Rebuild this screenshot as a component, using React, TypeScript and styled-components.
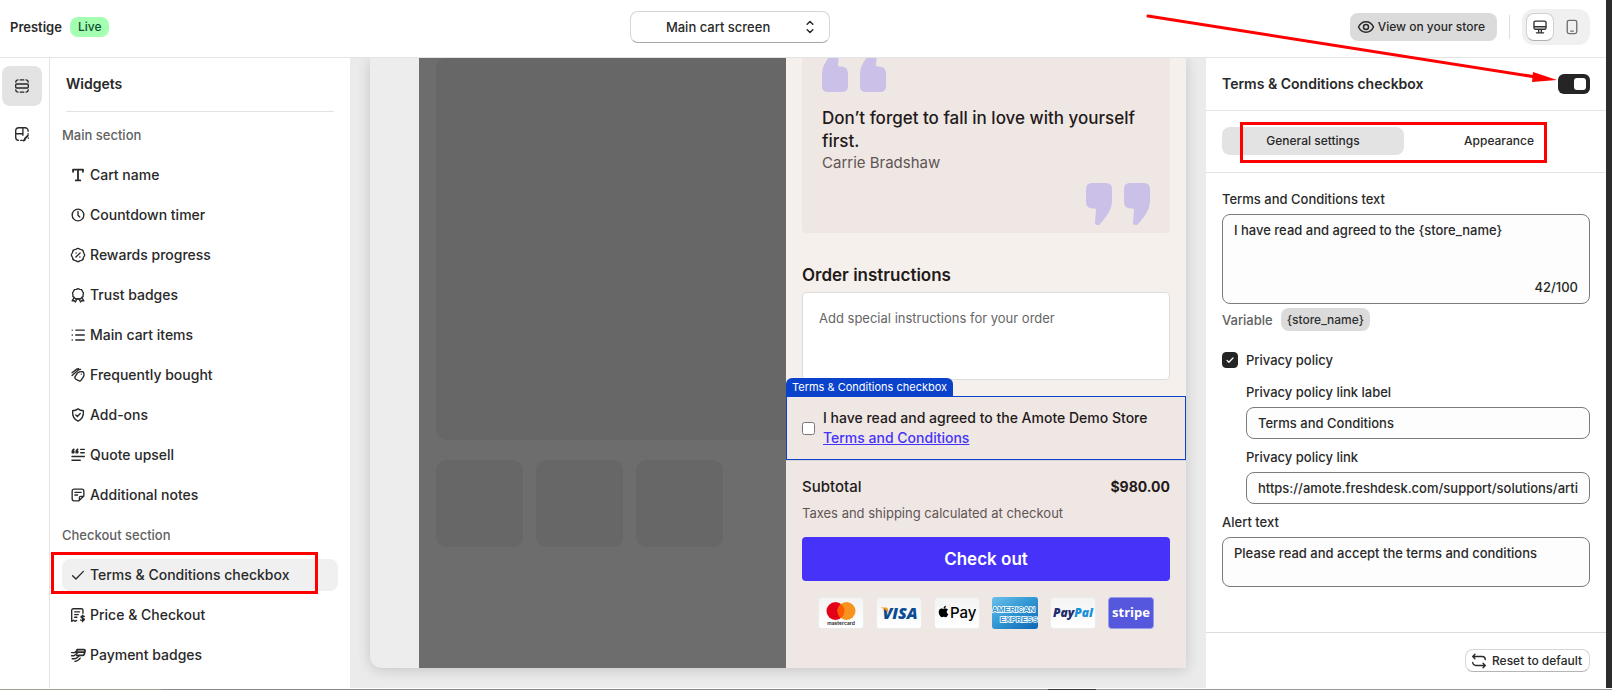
import React from 'react';
import styled, { createGlobalStyle, css } from 'styled-components';
import { FaApple } from 'react-icons/fa';

const GlobalStyle = createGlobalStyle`
  *, *::before, *::after { box-sizing: border-box; }
  body {
    margin: 0;
    background: #fff;
    color: #292929;
    font: 400 13px/20px Inter, sans-serif;
  }
  button, input, textarea, select { font: inherit; color: inherit; margin: 0; }
  h2, h3, p { margin: 0; }
`;

/* ---------- icons ---------- */

const ICONS: Record<string, React.ReactNode> = {
  sections: (
    <>
      <rect x="3" y="7.800" width="14" height="4.400" rx="1" />
      <path d="M3 5.700a2.700 2.700 0 0 1 2.500-2.500M8 3.200h4M14.500 3.200A2.700 2.700 0 0 1 17 5.700M3 14.300a2.700 2.700 0 0 0 2.500 2.500M8 16.800h4M14.500 16.800a2.700 2.700 0 0 0 2.500-2.500" />
    </>
  ),
  theme: (
    <>
      <path d="M16.800 7V6.500A3.400 3.400 0 0 0 13.400 3H6.500A3.500 3.500 0 0 0 3 6.500v7A3.400 3.400 0 0 0 6.200 17M3 9.700h8M11 3v8.500M8.500 17H10M16.800 9.500v.600" />
      <path d="M16.500 11.700l-3 3.200M11.400 17.200c1.400 0 2.200-.700 1.800-2" strokeWidth="2" />
      <path d="M17 14.300v.300" />
    </>
  ),
  text: <path d="M4.500 6.500V4h11v2.500M10 4v12M7.500 16h5" strokeWidth="2" />,
  clock: (
    <>
      <circle cx="10" cy="10" r="6.500" />
      <path d="M10 6v4.200l2 2" />
    </>
  ),
  discount: (
    <>
      <path d="M8.200 3.400a2.500 2.500 0 0 1 3.600 0 2.500 2.500 0 0 0 1.700.7 2.500 2.500 0 0 1 2.400 2.400c0 .7.3 1.300.7 1.700a2.500 2.500 0 0 1 0 3.600 2.500 2.500 0 0 0-.7 1.700 2.500 2.500 0 0 1-2.400 2.400 2.500 2.500 0 0 0-1.700.7 2.500 2.500 0 0 1-3.600 0 2.500 2.500 0 0 0-1.700-.7 2.500 2.500 0 0 1-2.400-2.400 2.500 2.500 0 0 0-.7-1.700 2.500 2.500 0 0 1 0-3.600 2.500 2.500 0 0 0 .7-1.700 2.500 2.500 0 0 1 2.400-2.400 2.500 2.500 0 0 0 1.700-.7z" />
      <path d="M12.300 7.700l-4.600 4.600M7.800 7.800h.2M12 12.200h.2" />
    </>
  ),
  badge: (
    <>
      <path d="M10 2.800l1.900.9 2.100.3.900 1.900 1.200 1.700-.5 2 .1 2.100-1.700 1.200-1.300 1.500-2-.2-.700.100-.700-.100-2 .200-1.300-1.500-1.700-1.200.100-2.100-.500-2 1.200-1.700.900-1.900 2.100-.300z" />
      <path d="M5.800 12.800l-2.300 3.700 2.400-.200 1.200 1.500 1.900-3.400 1-.200 1 .200 1.900 3.400 1.200-1.500 2.400.200-2.300-3.700" />
    </>
  ),
  list: <path d="M7.500 4.500H17M7.500 10H17M7.500 15.500H17M3.500 4.500h.2M3.500 10h.2M3.500 15.500h.2" />,
  tags: (
    <>
      <path d="M9.300 7.800l2.500-1.300a2.500 2.500 0 0 1 1.300-.3l2 .2a1.500 1.500 0 0 1 1.300 1.300l.2 2a3 3 0 0 1-.5 2l-2.400 3.800a2.300 2.300 0 0 1-3 .8l-3-1.600a2.300 2.300 0 0 1-.9-3z" />
      <path d="M3.400 10.500l7-6a3 3 0 0 1 2.400-.7M3.400 7.500l5.200-4a3 3 0 0 1 2-.6M13.600 9h.1" />
    </>
  ),
  shield: (
    <>
      <path d="M10 3.200c1.700 1.300 3.600 2 6 2.100.4 5.600-1.200 9.400-6 11.500-4.800-2.100-6.400-5.900-6-11.500 2.400-.1 4.300-.8 6-2.100z" />
      <path d="M7.500 10l1.800 1.700 3.200-3.400" />
    </>
  ),
  quote: (
    <>
      <path d="M13 3.800H17M13 7.500H17M3.300 11.700H17M3.300 15.800h9.200" />
      <path d="M5.300 3.800C4 4.400 3.600 5.600 3.700 7.300h1.600v-1.300M9.600 3.800C8.300 4.400 7.900 5.600 8 7.300h1.600v-1.300" strokeWidth="2" />
    </>
  ),
  note: (
    <path d="M16.500 11V5.700a2.200 2.200 0 0 0-2.200-2.200H5.700a2.200 2.200 0 0 0-2.200 2.200v8.600a2.200 2.200 0 0 0 2.200 2.200H11l5.500-5.500zM11.500 16v-3a1.500 1.500 0 0 1 1.500-1.500h3M6.500 7h7M6.500 10h3" />
  ),
  check: <path d="M4 10.800l3.700 3.700L16 6" />,
  receipt: (
    <>
      <path d="M15.500 8V4.700A1.700 1.700 0 0 0 13.800 3H4.700A1.700 1.700 0 0 0 3 4.700V17l2-1.200L7 17l1.500-1M6.300 6.500h5.500M6.300 9.500h4M6.300 12.500h2.500" />
      <path d="M17 11.700c-.6-.8-3.700-1-3.700.6s3.700 1 3.700 2.700-3.300 1.600-4 .5M15.200 10.300v7.200" />
    </>
  ),
  cards: (
    <>
      <path d="M9 4h7.500a1.300 1.300 0 0 1 1.300 1.700L17 9a2 2 0 0 1-2 1.500H8.500M8 6.800h9.500" strokeWidth="2" />
      <path d="M2.800 7.300h3.700L10 4M2.800 10.800h2.700l4.200-3.300M3.500 14.200h2.700c2 0 3.800-2 5.300-3.500M6.500 17c3 0 4.500-1.500 6-3.500" />
    </>
  ),
  eye: (
    <>
      <path d="M2.500 10C4 6.800 6.700 4.800 10 4.800s6 2 7.500 5.200c-1.500 3.200-4.200 5.200-7.500 5.200S4 13.200 2.500 10z" />
      <circle cx="10" cy="10" r="2.500" />
    </>
  ),
  desktop: (
    <path d="M5 3.500h10a1.700 1.700 0 0 1 1.700 1.700v5.600a1.700 1.700 0 0 1-1.700 1.700H5a1.700 1.700 0 0 1-1.700-1.700V5.200A1.700 1.700 0 0 1 5 3.500zM3.500 9.700h13M8.500 12.500v3M11.500 12.500v3M6 16.500h8" />
  ),
  mobile: (
    <>
      <rect x="4.700" y="2.700" width="10.600" height="14.600" rx="2" />
      <path d="M8.500 14.500h3" />
    </>
  ),
  select: <path d="M7.200 7.200L10 4.500l2.800 2.700M7.200 12.800L10 15.500l2.800-2.700" />,
  reset: (
    <path d="M5.500 2.500L3 5l2.500 2.500M3 5h10.500A3.500 3.500 0 0 1 17 8.500M14.500 12.500L17 15l-2.500 2.500M17 15H6.500A3.500 3.500 0 0 1 3 11.500" />
  ),
};

const Svg = styled.svg<{ $size: number }>`
  width: ${(p) => p.$size}px;
  height: ${(p) => p.$size}px;
  flex: none;
  fill: none;
  stroke: currentColor;
  stroke-width: 1.5;
  stroke-linecap: round;
  stroke-linejoin: round;
`;

const Icon = ({ name, size = 18 }: { name: string; size?: number }) => (
  <Svg $size={size} viewBox="0 0 20 20" aria-hidden="true">
    {ICONS[name]}
  </Svg>
);

/* ---------- frame ---------- */

const Page = styled.div`
  display: flex;
  flex-direction: column;
  height: 100vh;
  min-height: 640px;
`;
const Frame = styled.div`
  flex: 1;
  min-height: 0;
  display: flex;
`;
const Shell = styled.div`
  position: relative;
  flex: 1;
  min-width: 0;
  display: flex;
  flex-direction: column;
`;
const WindowEdge = styled.div`
  width: 6px;
  background: #2c2c2c;
`;
const BottomEdge = styled.div`
  height: 2px;
  border-top: 1px solid #fff;
  background: linear-gradient(
    90deg,
    #a09c94 0 10%,
    #8a8a8a 10% 65%,
    #3a3838 65% 68%,
    #9a9a9a 68% 100%
  );
`;
const Columns = styled.div`
  flex: 1;
  min-height: 0;
  display: flex;
`;

/* ---------- top bar ---------- */

const TopBar = styled.header`
  display: flex;
  align-items: center;
  justify-content: space-between;
  height: 58px;
  flex: none;
  padding: 0 16px 4px 10px;
  border-bottom: 1px solid #e3e3e3;
`;
const ThemeTitle = styled.div`
  display: flex;
  align-items: center;
  gap: 8px;
  font-weight: 600;
`;
const LiveBadge = styled.span`
  padding: 0 8px;
  border-radius: 8px;
  background: #a4ffb1;
  color: #0c5132;
  font-size: 12px;
  font-weight: 450;
`;
const ScreenPicker = styled.label`
  position: relative;
  width: 200px;
  height: 32px;

  svg {
    position: absolute;
    right: 10px;
    top: 6px;
    pointer-events: none;
  }
`;
const ScreenSelect = styled.select`
  appearance: none;
  width: 100%;
  height: 100%;
  padding: 0 31px 0 8px;
  border: 1px solid #d6d6d6;
  border-bottom-color: #a8a8a8;
  border-radius: 8px;
  background: #fff;
  font-weight: 450;
  text-align: center;
  text-align-last: center;
`;
const TopActions = styled.div`
  display: flex;
  align-items: center;
  gap: 12px;
`;
const ViewButton = styled.button`
  display: flex;
  align-items: center;
  gap: 2px;
  height: 28px;
  padding: 0 12px 0 6px;
  border: 0;
  border-radius: 8px;
  background: #dbdbdb;
  font-size: 12px;
  font-weight: 500;
`;
const Divider = styled.span`
  width: 1px;
  height: 24px;
  background: #dedede;
`;
const DeviceSwitch = styled.div`
  display: flex;
  gap: 4px;
  padding: 4px;
  border-radius: 12px;
  background: #f0f0f0;
`;
const DeviceButton = styled.button<{ $active?: boolean }>`
  display: grid;
  place-items: center;
  width: 28px;
  height: 28px;
  padding: 0;
  border: 1px solid transparent;
  border-radius: 8px;
  background: none;
  color: #707070;
  ${(p) =>
    p.$active &&
    css`
      border-color: #d0d0d0;
      border-bottom-color: #b0b0b0;
      background: #fff;
      color: #303030;
    `}
`;

/* ---------- left side ---------- */

const Rail = styled.nav`
  display: flex;
  flex-direction: column;
  gap: 8px;
  width: 50px;
  flex: none;
  padding: 8px 2px;
  border-right: 1px solid #e3e3e3;
`;
const RailButton = styled.button<{ $active?: boolean }>`
  display: grid;
  place-items: center;
  width: 40px;
  height: 40px;
  padding: 0;
  border: 0;
  border-radius: 8px;
  background: ${(p) => (p.$active ? '#e3e3e3' : 'none')};
`;
const Sidebar = styled.aside`
  width: 300px;
  flex: none;
  padding: 0 12px;
`;
const SidebarTitle = styled.h2`
  margin: 0 4px 7px;
  padding: 16px 0 17px;
  border-bottom: 1px solid #e3e3e3;
  font-size: 14px;
  line-height: 20px;
  font-weight: 600;
`;
const WidgetList = styled.div`
  display: flex;
  flex-direction: column;
  gap: 8px;
`;
const GroupTitle = styled.h3`
  font-size: 13px;
  line-height: 32px;
  font-weight: 450;
  color: #616161;
`;
const WidgetSlot = styled.div`
  position: relative;
`;
const WidgetButton = styled.button<{ $active?: boolean }>`
  display: flex;
  align-items: center;
  gap: 3px;
  width: 100%;
  height: 32px;
  padding: 0 7px;
  border: 0;
  border-radius: 8px;
  background: ${(p) => (p.$active ? '#f0f0f0' : 'none')};
  font-size: 14px;
  font-weight: 450;
`;

/* ---------- annotations ---------- */

const Highlight = styled.span<{ $inset: string }>`
  position: absolute;
  inset: ${(p) => p.$inset};
  border: 3px solid #f00;
  pointer-events: none;
`;
const Arrow = styled.svg`
  position: absolute;
  top: 0;
  right: 44px;
  width: 418px;
  height: 90px;
  pointer-events: none;
`;

/* ---------- preview ---------- */

const Canvas = styled.main`
  flex: 1;
  min-width: 0;
  display: flex;
  padding: 0 20px 20px;
  overflow: hidden;
  background: #ebebeb;
`;
const Preview = styled.div`
  flex: 1;
  min-width: 0;
  display: flex;
  padding-left: 49px;
  border-radius: 0 0 0 12px;
  background: #ededed;
  box-shadow: 0 2px 14px rgba(0, 0, 0, 0.16);
`;
const Storefront = styled.div`
  flex: 1;
  min-width: 0;
  display: flex;
  flex-direction: column;
  gap: 20px;
  padding: 0 0 121px 17px;
  background: #6d6d6d;
`;
const HeroBlock = styled.div`
  flex: 1;
  border-radius: 10px 0 0 10px;
  background: #676767;
`;
const Thumbs = styled.div`
  display: flex;
  gap: 13px;
`;
const Thumb = styled.div`
  width: 87px;
  height: 87px;
  border-radius: 10px;
  background: #676767;
`;
const Cart = styled.section`
  display: flex;
  flex-direction: column;
  justify-content: flex-end;
  width: 400px;
  flex: none;
  overflow: hidden;
  background: #f5f0ec;
  color: #241a1a;
`;
const CartBody = styled.div`
  padding: 0 16px 16px;
`;
const QuoteCard = styled.blockquote`
  margin: 0 0 30px;
  padding: 8px 20px;
  border-radius: 4px;
  background: #efe7e4;
`;
const QuoteMark = styled.svg<{ $closing?: boolean }>`
  display: block;
  width: 64px;
  height: 42px;
  fill: #cbc1e8;
  ${(p) => (p.$closing ? 'margin: 10px 0 0 auto;' : 'margin-bottom: 15px;')}
`;
const QuoteText = styled.p`
  font-size: 17px;
  line-height: 23px;
  font-weight: 500;
`;
const QuoteAuthor = styled.p`
  font-size: 15px;
  line-height: 20px;
  color: #5f5555;
`;
const NotesLabel = styled.label`
  display: block;
  margin-bottom: 5px;
  font-size: 17px;
  line-height: 24px;
  font-weight: 600;
`;
const Notes = styled.textarea`
  display: block;
  width: 100%;
  height: 88px;
  padding: 15px 16px;
  border: 1px solid #dcdcdc;
  border-radius: 4px;
  background: #fff;
  resize: none;

  &::placeholder {
    color: #666;
  }
`;
const Terms = styled.div`
  position: relative;
  display: flex;
  align-items: center;
  gap: 8px;
  height: 64px;
  flex: none;
  padding: 0 15px;
  border: 1px solid #0a42cc;
  background: #efe7e4;
  font-size: 14px;
  font-weight: 500;

  input {
    width: 13px;
    height: 13px;
  }
`;
const TermsTag = styled.span`
  position: absolute;
  left: -1px;
  bottom: 100%;
  padding: 0 6px;
  border-radius: 6px 6px 0 0;
  background: #0a42cc;
  color: #fff;
  font-size: 11px;
  line-height: 19px;
  font-weight: 400;
`;
const TermsLink = styled.a`
  color: #4632f8;
`;
const CartFooter = styled.div`
  flex: none;
  padding: 14px 16px 39px;
  border-top: 1px solid #d8d4d3;
  background: #efe7e4;
`;
const Subtotal = styled.div`
  display: flex;
  justify-content: space-between;
  font-size: 15px;
  line-height: 24px;
  font-weight: 500;

  strong {
    font-size: 14px;
    font-weight: 700;
  }
`;
const TaxNote = styled.p`
  margin: 4px 0 14px;
  color: #5f5555;
`;
const CheckoutButton = styled.button`
  width: 100%;
  height: 44px;
  border: 0;
  border-radius: 4px;
  background: #4632f8;
  color: #fff;
  font-size: 17px;
  font-weight: 600;
`;
const PaymentRow = styled.div`
  display: flex;
  justify-content: center;
  gap: 12px;
  margin-top: 16px;
`;
const PayLogo = styled.svg`
  width: 46px;
  height: 32px;
`;

/* ---------- settings ---------- */

const Settings = styled.aside`
  display: flex;
  flex-direction: column;
  width: 400px;
  flex: none;
`;
const SettingsHeader = styled.label`
  display: flex;
  align-items: center;
  justify-content: space-between;
  height: 53px;
  padding: 0 16px;
  border-bottom: 1px solid #e3e3e3;
  font-size: 14px;
  font-weight: 600;
`;
const Switch = styled.input`
  appearance: none;
  display: flex;
  align-items: center;
  width: 32px;
  height: 20px;
  padding: 0 4px;
  border-radius: 6px;
  background: #8a8a8a;

  &::before {
    content: '';
    width: 12px;
    height: 12px;
    border-radius: 3px;
    background: #fff;
  }
  &:checked {
    justify-content: flex-end;
    background: #252525;
  }
`;
const TabBar = styled.div`
  padding: 16px 16px 17px;
  border-bottom: 1px solid #e3e3e3;
`;
const Tabs = styled.div`
  position: relative;
  display: flex;
  gap: 4px;
`;
const Tab = styled.button<{ $active?: boolean }>`
  flex: 1;
  height: 28px;
  padding: 0;
  border: 0;
  border-radius: 8px;
  background: ${(p) => (p.$active ? '#e3e3e3' : 'none')};
  font-size: 12px;
  font-weight: 500;
`;
const Form = styled.div`
  flex: 1;
  min-height: 0;
  display: flex;
  flex-direction: column;
  gap: 8px;
  padding: 16px;
  font-weight: 450;
`;
const Field = styled.div`
  position: relative;
  display: flex;
  flex-direction: column;
  gap: 5px;
`;
const fieldBox = css`
  width: 100%;
  border: 1px solid #7b7b80;
  border-radius: 8px;
  background: #fdfdfd;
`;
const TextInput = styled.input`
  ${fieldBox}
  height: 32px;
  padding: 0 11px;
`;
const TextArea = styled.textarea<{ $height: number }>`
  ${fieldBox}
  display: block;
  height: ${(p) => p.$height}px;
  padding: 5px 11px;
  resize: none;
`;
const Counter = styled.span`
  position: absolute;
  right: 12px;
  bottom: 7px;
`;
const VariableRow = styled.div`
  display: flex;
  align-items: center;
  gap: 8px;
  margin: -4px 0 11px;
  color: #616161;
`;
const VariableTag = styled.button`
  height: 23px;
  padding: 0 6px;
  border: 0;
  border-radius: 8px;
  background: #dbdbdb;
  color: #303030;
  font-size: 12px;
  font-weight: 450;
`;
const CheckLabel = styled.label`
  display: flex;
  align-items: center;
  gap: 8px;
  margin-bottom: 4px;
`;
const CheckBox = styled.input`
  appearance: none;
  width: 16px;
  height: 16px;
  border: 1px solid #252525;
  border-radius: 4px;

  &:checked {
    background: #252525;
  }
`;
const CheckWrap = styled.span`
  position: relative;
  display: flex;
  color: #fff;

  svg {
    position: absolute;
    inset: 3px;
    stroke-width: 2.5;
    pointer-events: none;
  }
`;
const Nested = styled.div`
  display: flex;
  flex-direction: column;
  gap: 8px;
  padding-left: 24px;
`;
const SettingsFooter = styled.footer`
  display: flex;
  justify-content: flex-end;
  padding: 16px;
  border-top: 1px solid #dcdcdc;
`;
const ResetButton = styled.button`
  display: flex;
  align-items: center;
  gap: 4px;
  height: 23px;
  padding: 0 7px 0 4px;
  border: 1px solid #d6d6d6;
  border-bottom-color: #b5b5b5;
  border-radius: 8px;
  background: #fff;
  font-size: 12px;
  font-weight: 500;
`;

const MAIN_WIDGETS = [
  ['text', 'Cart name'],
  ['clock', 'Countdown timer'],
  ['discount', 'Rewards progress'],
  ['badge', 'Trust badges'],
  ['list', 'Main cart items'],
  ['tags', 'Frequently bought'],
  ['shield', 'Add-ons'],
  ['quote', 'Quote upsell'],
  ['note', 'Additional notes'],
];
const CHECKOUT_WIDGETS = [
  ['check', 'Terms & Conditions checkbox'],
  ['receipt', 'Price & Checkout'],
  ['cards', 'Payment badges'],
];
const SELECTED = 'Terms & Conditions checkbox';

const Widget = ({ icon, label }: { icon: string; label: string }) => (
  <WidgetSlot>
    <WidgetButton type="button" $active={label === SELECTED}>
      <Icon name={icon} />
      {label}
    </WidgetButton>
    {label === SELECTED && <Highlight $inset="-7px 20px -3px -11px" />}
  </WidgetSlot>
);

const MARK =
  'M6 0H20Q26 0 26 6V18C26 26 21 33 14.500 40.500Q12.500 43 10.500 42Q8.800 41.300 9 39L10 27.500Q10.200 25.500 8.500 25.500H7Q0 25.500 0 18.500V6Q0 0 6 0Z';

const Marks = ({ closing }: { closing?: boolean }) => (
  <QuoteMark $closing={closing} viewBox="0 0 64 42" aria-hidden="true">
    <g transform={closing ? undefined : 'rotate(180 32 21)'}>
      <path d={MARK} />
      <path d={MARK} transform="translate(38 0)" />
    </g>
  </QuoteMark>
);

const Plate = ({ fill = 'url(#plate)', stroke = '#ebebeb' }: { fill?: string; stroke?: string }) => (
  <rect x="0.500" y="0.500" width="45" height="31" rx="3" fill={fill} stroke={stroke} />
);

const Payments = () => (
  <PaymentRow>
    <PayLogo viewBox="0 0 46 32" role="img" aria-label="Mastercard">
      <defs>
        <linearGradient id="plate" x1="0" y1="0" x2="0" y2="1">
          <stop offset="0" stopColor="#f3f3f3" />
          <stop offset="1" stopColor="#ffffff" />
        </linearGradient>
        <linearGradient id="amex" x1="0" y1="0" x2="1" y2="1">
          <stop offset="0" stopColor="#6cc0ea" />
          <stop offset="0.500" stopColor="#2f95d2" />
          <stop offset="1" stopColor="#0f66b4" />
        </linearGradient>
      </defs>
      <Plate />
      <circle cx="17.500" cy="14" r="9" fill="#e5001a" />
      <circle cx="28.500" cy="14" r="9" fill="#f79420" />
      <path d="M23 6.900a9 9 0 0 1 0 14.200a9 9 0 0 1 0-14.200z" fill="#ff5a00" />
      <text x="23" y="28" fontSize="5" fontWeight="600" textAnchor="middle" fill="#222">mastercard</text>
    </PayLogo>
    <PayLogo viewBox="0 0 46 32" role="img" aria-label="Visa">
      <Plate />
      <text x="24" y="22" fontFamily="Open Sans, sans-serif" fontSize="16" fontWeight="800" fontStyle="italic" textAnchor="middle" fill="#0b4a94">VISA</text>
      <path d="M4.500 10.400h5.300c1.100 0 1.800.5 2 1.500l1.300 5.800C11.800 14.300 9 11.700 4.500 10.400z" fill="#f39b1c" />
    </PayLogo>
    <PayLogo viewBox="0 0 46 32" role="img" aria-label="Apple Pay">
      <Plate />
      <FaApple x="3" y="8" width="12" height="13" color="#000" />
      <text x="16" y="21" fontSize="15" fontWeight="500" fill="#000">Pay</text>
    </PayLogo>
    <PayLogo viewBox="0 0 46 32" role="img" aria-label="American Express">
      <rect width="46" height="32" rx="3" fill="url(#amex)" />
      <g fontSize="8" fontWeight="700" fontFamily="Liberation Sans, sans-serif" fill="#2b8fce" stroke="#fff" strokeWidth="1.600" paintOrder="stroke">
        <text x="0" y="15">AMERICAN</text>
        <text x="8" y="25">EXPRESS</text>
      </g>
    </PayLogo>
    <PayLogo viewBox="0 0 46 32" role="img" aria-label="PayPal">
      <Plate />
      <text x="23" y="20" fontFamily="Open Sans, sans-serif" fontSize="12" fontWeight="800" fontStyle="italic" textAnchor="middle" fill="#1f2d6e">
        Pay<tspan fill="#1a8fd8">Pal</tspan>
      </text>
    </PayLogo>
    <PayLogo viewBox="0 0 46 32" role="img" aria-label="Stripe">
      <Plate fill="#5558dc" stroke="#9b9dec" />
      <text x="23" y="20" fontFamily="Open Sans, sans-serif" fontSize="13" fontWeight="700" textAnchor="middle" fill="#fff">stripe</text>
    </PayLogo>
  </PaymentRow>
);

export default function App() {
  return (
    <Page>
      <GlobalStyle />
      <Frame>
        <Shell>
          <TopBar>
            <ThemeTitle>
              Prestige <LiveBadge>Live</LiveBadge>
            </ThemeTitle>
            <ScreenPicker>
              <ScreenSelect aria-label="Screen">
                <option>Main cart screen</option>
              </ScreenSelect>
              <Icon name="select" size={20} />
            </ScreenPicker>
            <TopActions>
              <ViewButton type="button">
                <Icon name="eye" size={20} />
                View on your store
              </ViewButton>
              <Divider />
              <DeviceSwitch>
                <DeviceButton type="button" $active aria-label="Desktop">
                  <Icon name="desktop" />
                </DeviceButton>
                <DeviceButton type="button" aria-label="Mobile">
                  <Icon name="mobile" />
                </DeviceButton>
              </DeviceSwitch>
            </TopActions>
          </TopBar>

          <Columns>
            <Rail>
              <RailButton type="button" $active aria-label="Sections">
                <Icon name="sections" />
              </RailButton>
              <RailButton type="button" aria-label="Theme">
                <Icon name="theme" />
              </RailButton>
            </Rail>

            <Sidebar>
              <SidebarTitle>Widgets</SidebarTitle>
              <WidgetList>
                <GroupTitle>Main section</GroupTitle>
                {MAIN_WIDGETS.map(([icon, label]) => (
                  <Widget key={label} icon={icon} label={label} />
                ))}
                <GroupTitle>Checkout section</GroupTitle>
                {CHECKOUT_WIDGETS.map(([icon, label]) => (
                  <Widget key={label} icon={icon} label={label} />
                ))}
              </WidgetList>
            </Sidebar>

            <Canvas>
              <Preview>
                <Storefront>
                  <HeroBlock />
                  <Thumbs>
                    <Thumb />
                    <Thumb />
                    <Thumb />
                  </Thumbs>
                </Storefront>
                <Cart>
                  <CartBody>
                    <QuoteCard>
                      <Marks />
                      <QuoteText>Don’t forget to fall in love with yourself first.</QuoteText>
                      <QuoteAuthor>Carrie Bradshaw</QuoteAuthor>
                      <Marks closing />
                    </QuoteCard>
                    <NotesLabel htmlFor="notes">Order instructions</NotesLabel>
                    <Notes id="notes" placeholder="Add special instructions for your order" />
                  </CartBody>
                  <Terms>
                    <TermsTag>Terms &amp; Conditions checkbox</TermsTag>
                    <input type="checkbox" id="agree" />
                    <div>
                      <label htmlFor="agree">I have read and agreed to the Amote Demo Store</label>{' '}
                      <TermsLink href="#terms">Terms and Conditions</TermsLink>
                    </div>
                  </Terms>
                  <CartFooter>
                    <Subtotal>
                      <span>Subtotal</span>
                      <strong>$980.00</strong>
                    </Subtotal>
                    <TaxNote>Taxes and shipping calculated at checkout</TaxNote>
                    <CheckoutButton type="button">Check out</CheckoutButton>
                    <Payments />
                  </CartFooter>
                </Cart>
              </Preview>
            </Canvas>

            <Settings>
              <SettingsHeader>
                Terms &amp; Conditions checkbox
                <Switch type="checkbox" role="switch" defaultChecked />
              </SettingsHeader>
              <TabBar>
                <Tabs>
                  <Tab type="button" $active>General settings</Tab>
                  <Tab type="button">Appearance</Tab>
                  <Highlight $inset="-5px 43px -8px 18px" />
                </Tabs>
              </TabBar>
              <Form>
                <Field>
                  <label htmlFor="terms-text">Terms and Conditions text</label>
                  <TextArea id="terms-text" $height={90} defaultValue="I have read and agreed to the {store_name}" />
                  <Counter>42/100</Counter>
                </Field>
                <VariableRow>
                  Variable <VariableTag type="button">{'{store_name}'}</VariableTag>
                </VariableRow>
                <CheckLabel>
                  <CheckWrap>
                    <CheckBox type="checkbox" defaultChecked />
                    <Icon name="check" size={10} />
                  </CheckWrap>
                  Privacy policy
                </CheckLabel>
                <Nested>
                  <Field>
                    <label htmlFor="link-label">Privacy policy link label</label>
                    <TextInput id="link-label" defaultValue="Terms and Conditions" />
                  </Field>
                  <Field>
                    <label htmlFor="link-url">Privacy policy link</label>
                    <TextInput id="link-url" defaultValue="https://amote.freshdesk.com/support/solutions/articles" />
                  </Field>
                </Nested>
                <Field>
                  <label htmlFor="alert-text">Alert text</label>
                  <TextArea id="alert-text" $height={50} defaultValue="Please read and accept the terms and conditions" />
                </Field>
              </Form>
              <SettingsFooter>
                <ResetButton type="button">
                  <Icon name="reset" />
                  Reset to default
                </ResetButton>
              </SettingsFooter>
            </Settings>
          </Columns>

          <Arrow viewBox="0 0 418 90" aria-hidden="true">
            <path d="M4 16L392 77" stroke="#f00" strokeWidth="3" strokeLinecap="round" />
            <path d="M389 72L413 80L388 82z" fill="#f00" />
          </Arrow>
        </Shell>
        <WindowEdge />
      </Frame>
      <BottomEdge />
    </Page>
  );
}
